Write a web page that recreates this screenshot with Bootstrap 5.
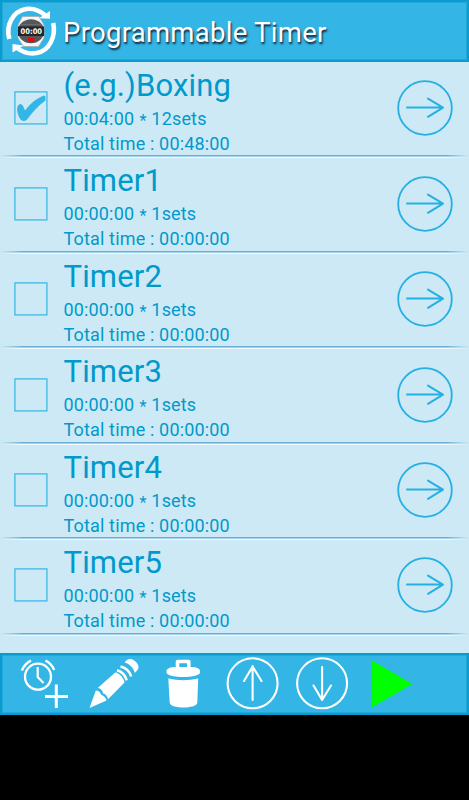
<!DOCTYPE html>
<html lang="en">
<head>
<meta charset="utf-8">
<meta name="viewport" content="width=device-width, initial-scale=1">
<title>Programmable Timer</title>
<link href="https://cdn.jsdelivr.net/npm/bootstrap@5.3.0/dist/css/bootstrap.min.css" rel="stylesheet">
<style>
body{background:#000;font-family:Roboto,"Noto Sans",sans-serif;overflow:hidden}
.screen{height:715px;background:#cce9f5}
.bar{background:#33b5e5;border:2px solid #0a9bcf;box-shadow:inset 0 0 0 1px #22a8da}
.top-bar{height:62px;padding-left:3px}
.bottom-bar{height:62px;padding-left:19px}
.app-title{font-size:27.5px;line-height:32px;color:#fff;font-weight:400;letter-spacing:.28px;margin:4px 0 0 6px;text-shadow:1px 2px 2px #123}
.timer-list{padding-top:1px}
.timer-row{height:95.45px;padding:0 16px 5px 14px;color:#0099cc;position:relative}
.timer-row::after{content:"";position:absolute;left:0;right:0;bottom:0;height:3px;background:linear-gradient(90deg,#cce9f5,transparent 5%,transparent 95%,#cce9f5),linear-gradient(#69aed6 0 1px,#a2d0e8 1px 2px,#f4fbfe 2px)}
.timer-name{font-size:31px;line-height:38px;letter-spacing:.15px;padding-top:4px}
.timer-line{font-size:18px;line-height:25px;letter-spacing:.16px}
.timer-name+.timer-line{padding-top:1px}
.star{display:inline-block;transform:translateY(2px) scale(.9)}
.texts{margin-left:15.5px;white-space:nowrap}
svg{display:block;flex:none;overflow:visible}
</style>
<script src="https://cdn.jsdelivr.net/npm/bootstrap@5.3.0/dist/js/bootstrap.bundle.min.js"></script>
</head>
<body>
<svg width="0" height="0" class="d-none">
<symbol id="go" viewBox="0 0 56 56"><g fill="none" stroke="#25b0e4" stroke-linecap="round" stroke-linejoin="round"><circle cx="28" cy="28" r="26.8" stroke-width="1.8"/><path d="M10 27.6H45M31 18.6 46 27.6 31 36.8" stroke-width="2"/></g></symbol>
<symbol id="box" viewBox="0 0 34 34"><rect x=".9" y=".9" width="32" height="32" fill="none" stroke="#48bce7" stroke-width="1.4"/></symbol>
</svg>
<main class="screen d-flex flex-column">
<header class="bar top-bar d-flex align-items-center">
<svg width="52" height="54" viewBox="5 4 52 54">
<g fill="none" stroke="#fff" stroke-width="4.6"><path d="M9.3 39C5.8 26 12 11.5 26 9C33 7.8 39.5 10.5 45 15"/><path d="M53.2 23C56 36 50 50.5 36.5 53C28.5 54.5 22.5 52 17 48"/></g>
<path d="M50 11V18.8L39 18.2ZM12.5 44V52.5L24 45.5Z" fill="#fff"/>
<path d="M22.5 16.5H39L44 25V38L38.5 46.5H23.5L18 38V25Z" fill="#f6f6f6" stroke="#a8adb0" stroke-width=".8"/>
<ellipse cx="31" cy="31.2" rx="13.2" ry="12" fill="#55585a"/>
<path d="M18 26.5H44V36H18Z" fill="#242526"/>
<path d="M21 24.5H41" stroke="#777" stroke-width=".7"/>
<rect x="28" y="37.7" width="6.5" height="4.2" fill="#e20c10"/>
<text x="31.3" y="34.3" text-anchor="middle" font-family="DejaVu Sans,sans-serif" font-weight="700" font-size="7.6" textLength="21.5" lengthAdjust="spacingAndGlyphs" fill="#fff">00:00</text>
</svg>
<h1 class="app-title">Programmable Timer</h1>
</header>
<section class="timer-list flex-grow-1">
<div class="timer-row d-flex"><svg class="my-auto" width="34" height="34"><use href="#box"/><path d="M4 14.5C6.5 11.5 8.8 12.8 11 19.5C16.5 12.5 22 8 30 4.6L31.4 5.2V9.5C24 15 18 21.5 13.5 28C11.5 30.6 8 30.4 6.2 28C4 24.8 2 17.5 4 14.5Z" fill="#33b5e5"/></svg><div class="texts"><div class="timer-name">(e.g.)Boxing</div><div class="timer-line">00:04:00 <span class="star">*</span> 12sets</div><div class="timer-line">Total time : 00:48:00</div></div><svg class="ms-auto my-auto" width="56" height="56"><use href="#go"/></svg></div>
<div class="timer-row d-flex"><svg class="my-auto" width="34" height="34"><use href="#box"/></svg><div class="texts"><div class="timer-name">Timer1</div><div class="timer-line">00:00:00 <span class="star">*</span> 1sets</div><div class="timer-line">Total time : 00:00:00</div></div><svg class="ms-auto my-auto" width="56" height="56"><use href="#go"/></svg></div>
<div class="timer-row d-flex"><svg class="my-auto" width="34" height="34"><use href="#box"/></svg><div class="texts"><div class="timer-name">Timer2</div><div class="timer-line">00:00:00 <span class="star">*</span> 1sets</div><div class="timer-line">Total time : 00:00:00</div></div><svg class="ms-auto my-auto" width="56" height="56"><use href="#go"/></svg></div>
<div class="timer-row d-flex"><svg class="my-auto" width="34" height="34"><use href="#box"/></svg><div class="texts"><div class="timer-name">Timer3</div><div class="timer-line">00:00:00 <span class="star">*</span> 1sets</div><div class="timer-line">Total time : 00:00:00</div></div><svg class="ms-auto my-auto" width="56" height="56"><use href="#go"/></svg></div>
<div class="timer-row d-flex"><svg class="my-auto" width="34" height="34"><use href="#box"/></svg><div class="texts"><div class="timer-name">Timer4</div><div class="timer-line">00:00:00 <span class="star">*</span> 1sets</div><div class="timer-line">Total time : 00:00:00</div></div><svg class="ms-auto my-auto" width="56" height="56"><use href="#go"/></svg></div>
<div class="timer-row d-flex"><svg class="my-auto" width="34" height="34"><use href="#box"/></svg><div class="texts"><div class="timer-name">Timer5</div><div class="timer-line">00:00:00 <span class="star">*</span> 1sets</div><div class="timer-line">Total time : 00:00:00</div></div><svg class="ms-auto my-auto" width="56" height="56"><use href="#go"/></svg></div>
</section>
<footer class="bar bottom-bar d-flex align-items-center">
<!-- add timer -->
<svg width="69" height="54" viewBox="21 657 69 54"><g fill="none" stroke="#fff"><circle cx="38" cy="676.7" r="13" stroke-width="2.3"/><path d="M37.7 667V677L43.5 683" stroke-width="2.2"/><path d="M21.8 670.5Q25 663.5 31 660.7M45.5 660.7Q51.5 663.5 54.2 670" stroke-width="2.4"/><path d="M45 696.5H68M56.3 684.5V708" stroke-width="3"/></g></svg>
<!-- edit -->
<svg width="76" height="54" viewBox="90 657 76 54"><g fill="#fff"><path d="M89.5 708 95.8 690.5Q99.5 690.5 101.3 694.8Q105.5 696.5 106.5 700.5Z"/><path d="M97.7 688 115.5 672.3C120.5 674 123.5 678 124.5 682.5L108 699.2Q107 694.5 103 693.2Q102.5 688.8 97.7 688Z"/><path d="M124.5 662.5C128 658 132 658 136 662C140 666.5 139 669 134.8 673C134 668 129 663.5 124.5 662.5Z"/></g><path d="M117 670.3Q124.5 672.5 126.7 680.3M120.5 666.5Q129 668.8 131.2 676.5" fill="none" stroke="#fff" stroke-width="2.5"/></svg>
<!-- delete -->
<svg width="61" height="54" viewBox="166 657 61 54"><path d="M177.5 668V661.5H188.8V668" fill="none" stroke="#fff" stroke-width="3.6" stroke-linejoin="round"/><path d="M166.5 671C166.5 668.5 171 667 175.5 667H191C196 667 200 668.5 200 671V673C197 678.3 169.5 678.3 166.5 673ZM168.3 678.5Q183 682 198.2 678.5L197.3 703C196 709 171 709 169.7 703Z" fill="#fff"/></svg>
<!-- move up -->
<svg width="69" height="54" viewBox="227 657 69 54"><g fill="none" stroke="#fff" stroke-linecap="round" stroke-linejoin="round" stroke-width="2.1"><circle cx="252.6" cy="683.3" r="25"/><path d="M252.6 700V666M244 681 252.6 666.5 261.5 681"/></g></svg>
<!-- move down -->
<svg width="74" height="54" viewBox="296 657 74 54"><g fill="none" stroke="#fff" stroke-linecap="round" stroke-linejoin="round" stroke-width="2.1"><circle cx="322.1" cy="683.3" r="25"/><path d="M322.1 667V700M313.5 685.5 322.1 700 331 685.5"/></g></svg>
<!-- start -->
<svg width="45" height="54" viewBox="370 657 45 54"><path d="M371.3 660V707.7L412.3 684Z" fill="#0f0"/></svg>
</footer>
</main>
</body>
</html>
